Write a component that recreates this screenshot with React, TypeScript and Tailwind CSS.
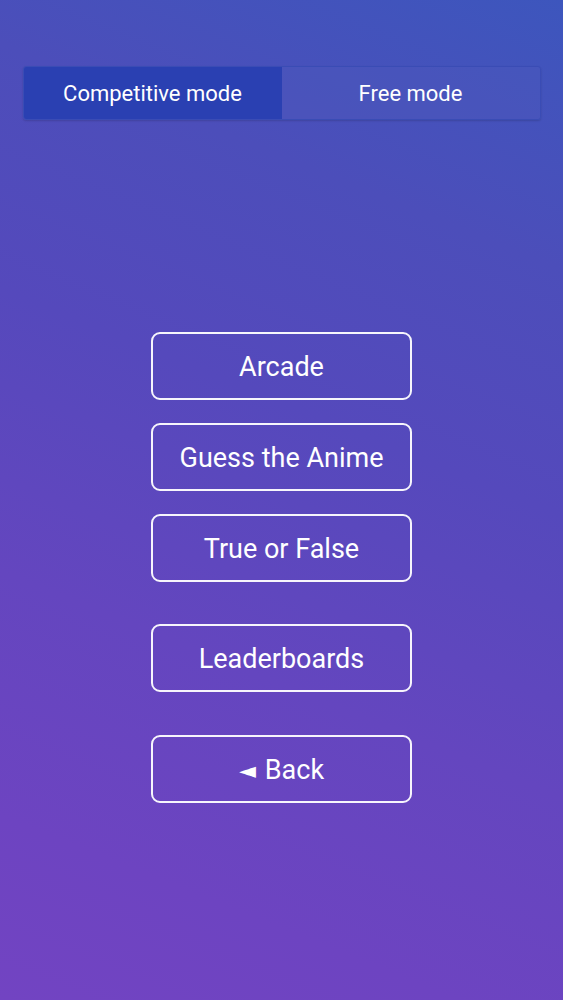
import React from "react";

function Btn({ children }: { children: React.ReactNode }) {
  return (
    <button className="w-[261px] h-[68px] rounded-[9px] border-2 border-white/95 text-white text-[27px] flex items-center justify-center bg-transparent pt-[2px]">
      {children}
    </button>
  );
}

export default function App() {
  return (
    <div
      className="w-[563px] h-[1000px] overflow-hidden bg-[linear-gradient(202deg,#3d56bd_0%,#4c4eba_22%,#5549bc_42%,#6446bf_65%,#6d44c1_85%,#7244c2_100%)] flex flex-col items-center"
      style={{ fontFamily: "Roboto, 'Liberation Sans', sans-serif" }}
    >
      <div className="mt-[66px] w-[518px] h-[54px] flex rounded-[3px] overflow-hidden border border-[#3a4cb5] bg-white/[0.04] shadow-[0_1px_2px_rgba(0,0,0,0.15)]">
        <div className="flex-1 bg-[#2a40b2] text-white text-[22px] flex items-center justify-center">
          Competitive mode
        </div>
        <div className="flex-1 text-white text-[22px] flex items-center justify-center bg-[#4350ba]/40">
          Free mode
        </div>
      </div>
      <div className="mt-[212px] flex flex-col items-center">
        <div className="flex flex-col gap-[23px]">
          <Btn>Arcade</Btn>
          <Btn>Guess the Anime</Btn>
          <Btn>True or False</Btn>
        </div>
        <div className="mt-[42px]">
          <Btn>Leaderboards</Btn>
        </div>
        <div className="mt-[43px]">
          <Btn>
            <span className="text-[22px] mr-[9px] mt-[1px]" style={{ fontFamily: "'DejaVu Sans', sans-serif" }}>◄</span>Back
          </Btn>
        </div>
      </div>
    </div>
  );
}
